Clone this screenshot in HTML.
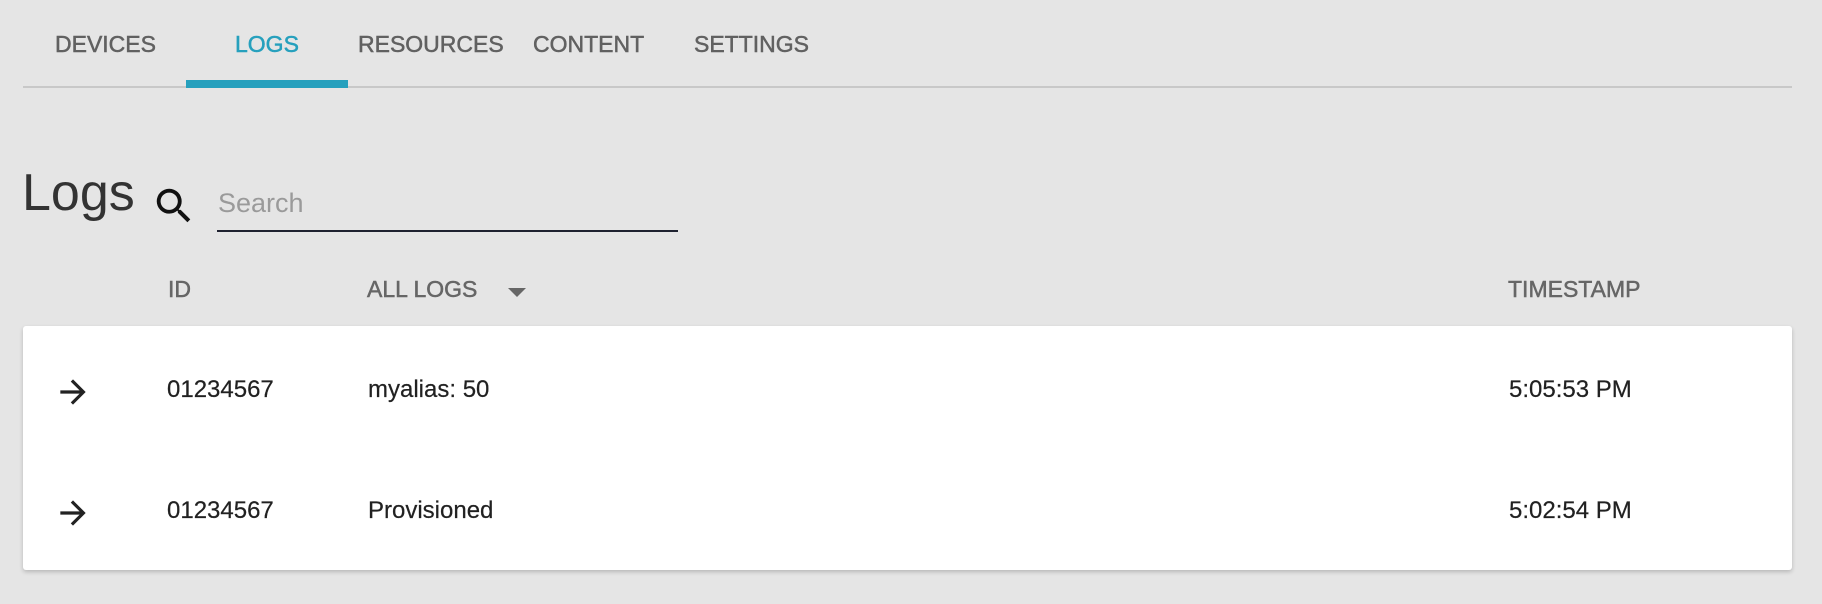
<!DOCTYPE html>
<html><head><style>
body{margin:0;width:1822px;height:604px;background:#e5e5e5;font-family:"Liberation Sans",sans-serif;position:relative;overflow:hidden}
.a{position:absolute;white-space:nowrap}
.tab{font-size:23px;color:#616161;top:31px;line-height:26px;-webkit-text-stroke:0.5px #616161}
.h{font-size:23px;color:#666;top:277px;line-height:24px;-webkit-text-stroke:0.5px #666}
.r{font-size:24px;color:#212121;line-height:26px;-webkit-text-stroke:0.2px #212121}
</style></head><body>
<div class="a tab" style="left:55px">DEVICES</div>
<div class="a tab" style="left:235px;color:#26a0bd;-webkit-text-stroke:0.5px #26a0bd">LOGS</div>
<div class="a tab" style="left:358px">RESOURCES</div>
<div class="a tab" style="left:533px">CONTENT</div>
<div class="a tab" style="left:694px">SETTINGS</div>
<div class="a" style="left:23px;top:86px;width:1769px;height:2px;background:#c8c8c8"></div>
<div class="a" style="left:186px;top:80px;width:162px;height:8px;background:#26a0bd"></div>

<div class="a" style="left:22px;top:164px;font-size:52px;font-weight:300;color:#333;line-height:58px">Logs</div>
<svg class="a" style="left:151px;top:183px" width="46" height="46" viewBox="0 0 24 24"><path fill="#111" d="M15.5 14h-.79l-.28-.27A6.470 6.470 0 0 0 16 9.5 6.5 6.5 0 1 0 9.5 16c1.61 0 3.09-.59 4.23-1.57l.27.28v.79l5 4.99L20.490 19l-4.99-5zm-6 0C7.01 14 5 11.99 5 9.5S7.01 5 9.5 5 14 7.01 14 9.5 11.99 14 9.5 14z"/></svg>
<div class="a" style="left:218px;top:188px;font-size:27px;color:#9a9a9a;line-height:30px">Search</div>
<div class="a" style="left:217px;top:230px;width:461px;height:2px;background:#1f2230"></div>

<div class="a h" style="left:168px">ID</div>
<div class="a h" style="left:367px">ALL LOGS</div>
<div class="a" style="left:508px;top:288px;width:0;height:0;border-left:9px solid transparent;border-right:9px solid transparent;border-top:9px solid #666"></div>
<div class="a h" style="left:1508px">TIMESTAMP</div>

<div class="a" style="left:23px;top:326px;width:1769px;height:244px;background:#fff;border-radius:3px;box-shadow:0 2px 4px rgba(0,0,0,.2)"></div>
<svg class="a" style="left:54px;top:373px" width="38" height="38" viewBox="0 0 24 24"><path fill="#222" d="M12 4l-1.41 1.41L16.17 11H4v2h12.17l-5.58 5.59L12 20l8-8z"/></svg>
<div class="a r" style="left:167px;top:377px">01234567</div>
<div class="a r" style="left:368px;top:377px">myalias: 50</div>
<div class="a r" style="left:1509px;top:377px">5:05:53 PM</div>
<svg class="a" style="left:54px;top:494px" width="38" height="38" viewBox="0 0 24 24"><path fill="#222" d="M12 4l-1.41 1.41L16.17 11H4v2h12.17l-5.58 5.59L12 20l8-8z"/></svg>
<div class="a r" style="left:167px;top:498px">01234567</div>
<div class="a r" style="left:368px;top:498px">Provisioned</div>
<div class="a r" style="left:1509px;top:498px">5:02:54 PM</div>
</body></html>
